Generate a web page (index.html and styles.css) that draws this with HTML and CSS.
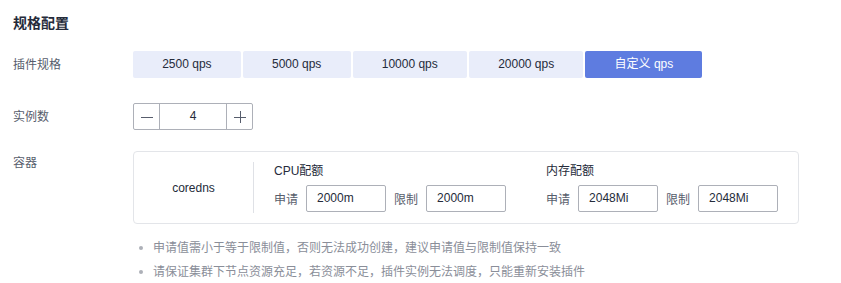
FILE: index.html
```html
<!DOCTYPE html>
<html lang="zh-CN">
<head>
    <meta charset="UTF-8">
    <title>规格配置</title>
    <link rel="stylesheet" href="styles.css">
</head>
<body>
    <div class="spec-panel">
        <div class="spec-title">规格配置</div>

        <!-- 插件规格 -->
        <div class="form-row">
            <div class="form-label">插件规格</div>
            <div class="qps-group">
                <div class="qps-btn">2500 qps</div>
                <div class="qps-btn">5000 qps</div>
                <div class="qps-btn">10000 qps</div>
                <div class="qps-btn">20000 qps</div>
                <div class="qps-btn active">自定义 qps</div>
            </div>
        </div>

        <!-- 实例数 -->
        <div class="form-row row-stepper">
            <div class="form-label">实例数</div>
            <div class="stepper">
                <div class="stepper-btn minus">
                    <svg width="12" height="12" viewBox="0 0 12 12"><path d="M0 6.5h12" stroke="#575d6c" stroke-width="1"/></svg>
                </div>
                <div class="stepper-value">4</div>
                <div class="stepper-btn plus">
                    <svg width="12" height="12" viewBox="0 0 12 12"><path d="M0 6.5h12M6.5 0v12" stroke="#575d6c" stroke-width="1"/></svg>
                </div>
            </div>
        </div>

        <!-- 容器 -->
        <div class="form-row row-container">
            <div class="form-label">容器</div>
            <div class="container-box">
                <div class="container-name">coredns</div>
                <div class="quota-area">
                    <div class="quota-group">
                        <div class="quota-title">CPU配额</div>
                        <div class="quota-inputs">
                            <span class="quota-label">申请</span>
                            <div class="quota-input">2000m</div>
                            <span class="quota-label">限制</span>
                            <div class="quota-input">2000m</div>
                        </div>
                    </div>
                    <div class="quota-group">
                        <div class="quota-title">内存配额</div>
                        <div class="quota-inputs">
                            <span class="quota-label">申请</span>
                            <div class="quota-input">2048Mi</div>
                            <span class="quota-label">限制</span>
                            <div class="quota-input">2048Mi</div>
                        </div>
                    </div>
                </div>
            </div>
        </div>

        <ul class="tips">
            <li>申请值需小于等于限制值，否则无法成功创建，建议申请值与限制值保持一致</li>
            <li>请保证集群下节点资源充足，若资源不足，插件实例无法调度，只能重新安装插件</li>
        </ul>
    </div>
</body>
</html>
```

FILE: styles.css
```css
* {
    margin: 0;
    padding: 0;
    box-sizing: border-box;
}

html, body {
    background: #ffffff;
    font-family: 'Liberation Sans', 'Noto Sans CJK SC', sans-serif;
    font-size: 12px;
    color: #252b3a;
}

.spec-panel {
    padding: 13px 0 0 13px;
}

.spec-title {
    font-size: 14px;
    font-weight: bold;
    line-height: 20px;
    color: #252b3a;
}

.form-row {
    display: flex;
    align-items: center;
    margin-top: 18px;
}

.form-label {
    width: 120px;
    flex-shrink: 0;
    color: #575d6c;
    line-height: 24px;
}

/* 规格按钮 */
.qps-group {
    display: flex;
    gap: 2px;
}

.qps-btn {
    height: 27px;
    line-height: 27px;
    padding: 0 29.2px;
    background: #e9edfa;
    color: #252b3a;
    border-radius: 2px;
}

.qps-btn.active {
    background: #5e7ce0;
    color: #ffffff;
}

/* 实例数 */
.row-stepper {
    margin-top: 25px;
}

.stepper {
    display: flex;
    width: 120px;
    height: 27px;
    border: 1px solid #adb0b8;
    border-radius: 2px;
}

.stepper-btn {
    width: 26px;
    display: flex;
    align-items: center;
    justify-content: center;
}

.stepper-btn.minus {
    border-right: 1px solid #adb0b8;
}

.stepper-btn.plus {
    border-left: 1px solid #adb0b8;
}

.stepper-value {
    flex: 1;
    text-align: center;
    line-height: 25px;
}

/* 容器 */
.row-container {
    align-items: flex-start;
    margin-top: 21px;
}

.container-box {
    display: inline-flex;
    border: 1px solid #e3e5e9;
    border-radius: 4px;
    height: 73px;
}

.container-name {
    width: 120px;
    margin: 10px 0;
    border-right: 1px solid #dfe1e6;
    display: flex;
    align-items: center;
    justify-content: center;
    color: #252b3a;
}

.quota-area {
    display: flex;
    gap: 40px;
    padding: 9px 20px 0;
}

.quota-title {
    line-height: 20px;
    color: #252b3a;
    margin-bottom: 4px;
}

.quota-inputs {
    display: flex;
    align-items: center;
}

.quota-label {
    color: #575d6c;
    margin-right: 8px;
}

.quota-input {
    width: 80px;
    height: 27px;
    line-height: 25px;
    padding: 0 10px;
    border: 1px solid #adb0b8;
    border-radius: 2px;
    margin-right: 8px;
}

.quota-input:last-child {
    margin-right: 0;
}

/* 提示 */
.tips {
    list-style: none;
    margin: 12px 0 0 126px;
}

.tips li {
    display: flex;
    align-items: center;
    line-height: 24px;
    color: #8a8e99;
}

.tips li::before {
    content: "";
    width: 4px;
    height: 4px;
    border-radius: 50%;
    background: #adb0b8;
    margin-right: 10px;
}
```
